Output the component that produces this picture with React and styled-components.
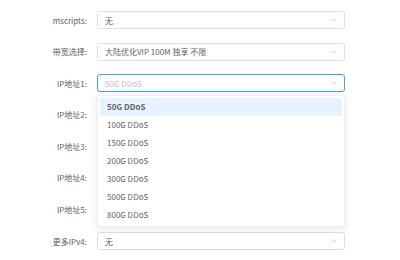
import React from 'react';
import styled, { createGlobalStyle } from 'styled-components';

const labelColor = "#606266";
const textColor = "#606266";
const placeholder = "#c0c4cc";
const border = "#dcdfe6";
const focus = "#409eff";

const GlobalStyle = createGlobalStyle`
    html, body {
        margin: 0;
        padding: 0;
        background: #ffffff;
    }
    body {
        font-family: "Noto Sans CJK SC", "Noto Sans", sans-serif;
    }
`;

const Form = styled.div`
    width: 400px;
    height: 260px;
    padding-top: 11px;
    box-sizing: border-box;
    overflow: hidden;
`;

const Row = styled.div`
    display: flex;
    align-items: center;
    height: 18px;
    margin-bottom: 13.6px;
`;

const Label = styled.div`
    width: 87px;
    padding-right: 10px;
    text-align: right;
    font-size: 8px;
    color: ${labelColor};
    white-space: nowrap;
`;

const SelectBox = styled.div`
    position: relative;
    width: 248px;
    height: 18px;
`;

const Input = styled.div`
    display: flex;
    align-items: center;
    justify-content: space-between;
    box-sizing: border-box;
    height: 18px;
    padding: 0 7px;
    border: 1px solid ${p => (p.$focused ? focus : border)};
    border-radius: 3px;
    background: #fff;
    font-size: 8px;
    color: ${p => (p.$placeholder ? placeholder : textColor)};
`;

const Arrow = () => (
    <svg width="6" height="4" viewBox="0 0 6 4">
        <path d="M0.5 0.6 L3 3.2 L5.5 0.6" fill="none" stroke={placeholder} strokeWidth="0.8" />
    </svg>
);

const Dropdown = styled.div`
    position: absolute;
    top: 21px;
    left: 0;
    width: 248px;
    box-sizing: border-box;
    padding: 2px;
    background: #fff;
    border: 1px solid #eceef2;
    border-radius: 3px;
    box-shadow: 0 2px 10px rgba(0, 0, 0, 0.1);
    z-index: 10;
`;

const Option = styled.div`
    height: 18px;
    line-height: 18px;
    padding-left: 7px;
    border-radius: 2px;
    font-size: 8px;
    color: ${textColor};
    background: ${p => (p.$active ? "#e6f2ff" : "transparent")};
    font-weight: ${p => (p.$active ? 600 : 400)};
`;

const options = ["50G DDoS", "100G DDoS", "150G DDoS", "200G DDoS", "300G DDoS", "500G DDoS", "800G DDoS"];

const Select = ({ value, placeholderText, open }) => (
    <SelectBox>
        <Input $focused={open} $placeholder={!value}>
            <span>{value || placeholderText}</span>
            <Arrow />
        </Input>
        {open && (
            <Dropdown>
                {options.map((o, i) => (
                    <Option key={o} $active={i === 0}>{o}</Option>
                ))}
            </Dropdown>
        )}
    </SelectBox>
);

export default function App() {
    return (
        <>
            <GlobalStyle />
            <Form>
                <Row><Label>mscripts:</Label><Select value="无" /></Row>
                <Row><Label>带宽选择:</Label><Select value="大陆优化VIP 100M 独享 不限" /></Row>
                <Row><Label>IP地址1:</Label><Select placeholderText="50G DDoS" open /></Row>
                <Row><Label>IP地址2:</Label><Select /></Row>
                <Row><Label>IP地址3:</Label><Select /></Row>
                <Row><Label>IP地址4:</Label><Select /></Row>
                <Row><Label>IP地址5:</Label><Select /></Row>
                <Row><Label>更多IPv4:</Label><Select value="无" /></Row>
            </Form>
        </>
    );
}
